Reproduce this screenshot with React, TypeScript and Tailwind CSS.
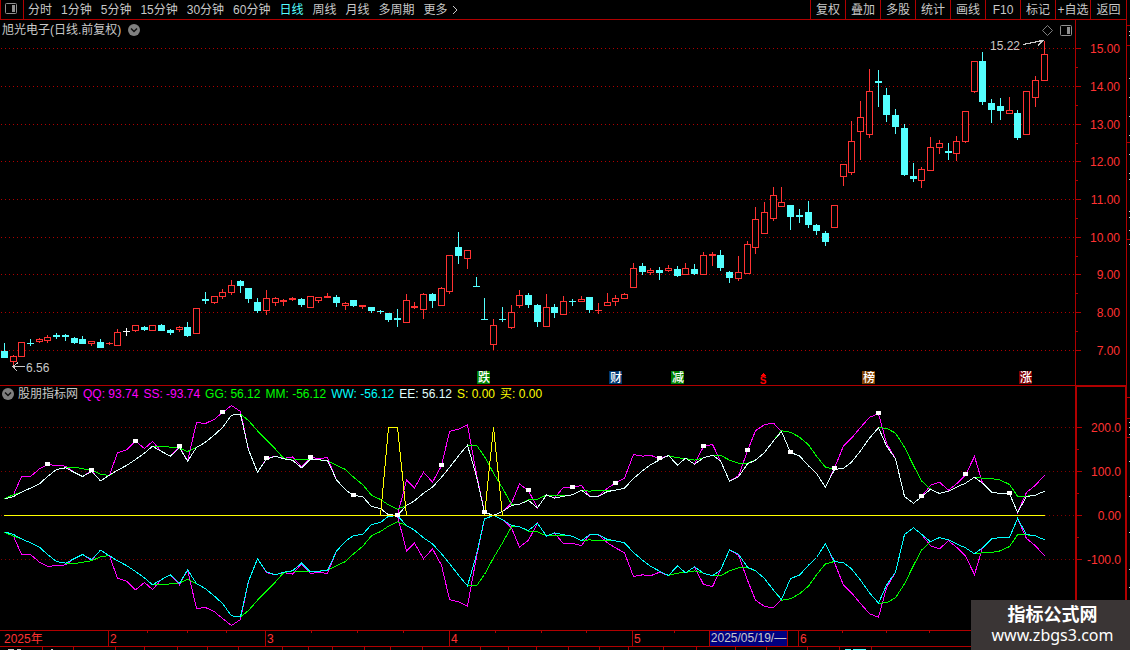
import { useState } from 'react'
import clsx from 'clsx'

type Kind = 'up' | 'down' | 'flat'
// body top, body bottom, high, low, kind
type Candle = [number, number, number, number, Kind]

const PERIODS = ['分时', '1分钟', '5分钟', '15分钟', '30分钟', '60分钟', '日线', '周线', '月线', '多周期']
const TOOLS = ['复权', '叠加', '多股', '统计', '画线', 'F10', '标记', '+自选', '返回']

const READOUTS = [
  { text: 'QQ: 93.74',   color: 'text-[#ff00ff]' },
  { text: 'SS: -93.74',  color: 'text-[#ff00ff]' },
  { text: 'GG: 56.12',   color: 'text-[#00ff00]' },
  { text: 'MM: -56.12',  color: 'text-[#00ff00]' },
  { text: 'WW: -56.12',  color: 'text-[#00ffff]' },
  { text: 'EE: 56.12',   color: 'text-[#e0ffff]' },
  { text: 'S: 0.00',     color: 'text-[#ffff00]' },
  { text: '买: 0.00',    color: 'text-[#ffff00]' },
]

const CANDLES: Candle[] = [
  [351, 358, 343, 358, 'down'], [356, 362, 355, 365, 'up'], [342, 357, 342, 357, 'up'], [343, 344, 339, 346, 'down'],
  [339, 342, 338, 343, 'up'], [337, 341, 335, 343, 'up'], [335, 337, 333, 339, 'down'], [335, 337, 334, 341, 'down'],
  [338, 343, 337, 344, 'down'], [339, 344, 336, 344, 'down'], [341, 344, 341, 346, 'up'], [342, 348, 339, 348, 'down'],
  [343, 344, 342, 345, 'up'], [332, 346, 329, 346, 'up'], [331, 332, 328, 336, 'flat'], [325, 331, 325, 332, 'up'],
  [327, 330, 326, 331, 'down'], [325, 331, 325, 331, 'up'], [325, 331, 324, 331, 'down'], [330, 333, 329, 335, 'down'],
  [327, 330, 326, 332, 'up'], [327, 336, 322, 337, 'down'], [308, 334, 308, 334, 'up'], [299, 301, 292, 304, 'down'],
  [296, 303, 296, 304, 'up'], [292, 297, 289, 299, 'up'], [285, 293, 280, 295, 'up'], [281, 286, 280, 293, 'down'],
  [288, 299, 288, 303, 'down'], [302, 311, 298, 313, 'down'], [298, 311, 290, 315, 'up'], [298, 303, 297, 306, 'up'],
  [300, 302, 299, 306, 'up'], [298, 300, 297, 301, 'up'], [299, 305, 298, 307, 'down'], [296, 308, 296, 308, 'up'],
  [297, 301, 297, 303, 'up'], [296, 298, 293, 298, 'up'], [297, 303, 295, 307, 'down'], [303, 306, 302, 310, 'up'],
  [300, 306, 300, 307, 'down'], [305, 307, 305, 309, 'up'], [307, 311, 307, 313, 'down'], [311, 312, 310, 314, 'down'],
  [313, 320, 313, 322, 'down'], [318, 320, 309, 327, 'down'], [300, 323, 294, 323, 'up'], [306, 308, 302, 309, 'up'],
  [294, 310, 293, 319, 'up'], [294, 301, 293, 308, 'down'], [288, 306, 287, 306, 'up'], [255, 292, 255, 294, 'up'],
  [247, 256, 232, 264, 'down'], [250, 259, 250, 269, 'up'], [286, 287, 277, 287, 'down'], [319, 320, 298, 320, 'down'],
  [325, 345, 319, 350, 'up'], [319, 320, 307, 322, 'down'], [312, 328, 305, 329, 'up'], [295, 306, 290, 308, 'up'],
  [295, 305, 293, 308, 'down'], [305, 322, 304, 327, 'down'], [307, 327, 294, 327, 'up'], [307, 313, 304, 318, 'down'],
  [301, 315, 296, 315, 'up'], [301, 302, 299, 306, 'down'], [299, 302, 296, 302, 'up'], [297, 310, 297, 313, 'down'],
  [310, 311, 303, 314, 'up'], [302, 306, 293, 306, 'up'], [298, 302, 295, 306, 'up'], [294, 299, 293, 299, 'up'],
  [268, 288, 263, 288, 'up'], [266, 272, 263, 275, 'down'], [270, 273, 268, 275, 'up'], [270, 273, 267, 280, 'down'],
  [268, 271, 265, 272, 'up'], [269, 276, 266, 277, 'down'], [268, 275, 263, 275, 'up'], [269, 274, 264, 275, 'down'],
  [255, 275, 252, 275, 'up'], [254, 256, 252, 266, 'up'], [255, 268, 250, 271, 'down'], [272, 278, 271, 283, 'down'],
  [272, 279, 256, 281, 'up'], [244, 274, 241, 274, 'up'], [219, 248, 207, 254, 'up'], [212, 234, 202, 234, 'up'],
  [195, 219, 187, 221, 'up'], [202, 207, 187, 207, 'up'], [205, 217, 205, 230, 'down'], [215, 217, 209, 223, 'down'],
  [212, 225, 201, 228, 'down'], [225, 231, 224, 235, 'down'], [233, 242, 231, 246, 'down'], [205, 228, 205, 228, 'up'],
  [164, 177, 164, 186, 'up'], [141, 173, 121, 175, 'up'], [117, 132, 101, 160, 'up'], [91, 135, 69, 138, 'up'],
  [81, 83, 70, 107, 'down'], [95, 115, 88, 122, 'down'], [115, 127, 109, 134, 'down'], [128, 175, 124, 176, 'down'],
  [176, 179, 163, 182, 'down'], [169, 181, 167, 188, 'up'], [147, 171, 137, 171, 'up'], [143, 148, 140, 154, 'up'],
  [151, 153, 143, 160, 'down'], [141, 154, 136, 161, 'up'], [111, 142, 111, 143, 'up'], [61, 92, 61, 93, 'up'],
  [61, 102, 52, 105, 'down'], [103, 110, 99, 123, 'down'], [106, 111, 98, 120, 'down'], [110, 114, 97, 114, 'up'],
  [113, 138, 110, 140, 'down'], [91, 135, 91, 135, 'up'], [80, 98, 76, 107, 'up'], [54, 81, 41, 81, 'up'],
]

// Indicator samples, one per candle, three units to the pixel; 407 is the zero line
const ZERO = 407
const EE = [
  358, 350, 337, 325, 312, 290, 269, 264, 278, 290, 275, 303, 286, 271, 257, 239, 220, 199, 215, 229,
  203, 244, 203, 187, 165, 143, 106, 103, 210, 277, 238, 229, 237, 241, 264, 238, 240, 242, 300, 330,
  347, 350, 380, 386, 405, 406, 377, 363, 340, 322, 292, 263, 228, 196, 290, 397, 407, 395, 377, 373,
  362, 384, 345, 355, 349, 345, 331, 349, 349, 335, 331, 325, 296, 273, 255, 240, 227, 256, 235, 253,
  234, 226, 243, 304, 291, 252, 241, 218, 183, 155, 218, 228, 258, 281, 322, 269, 265, 247, 213, 175,
  144, 198, 237, 350, 370, 351, 328, 341, 334, 322, 310, 292, 310, 337, 341, 341, 398, 350, 346, 334,
]
const QQ = [
  358, 345, 290, 290, 267, 255, 256, 259, 278, 290, 273, 303, 286, 219, 210, 184, 206, 185, 215, 229,
  199, 244, 128, 131, 118, 98, 77, 95, 210, 277, 236, 229, 236, 231, 262, 232, 237, 233, 300, 330,
  347, 350, 380, 386, 405, 406, 301, 324, 277, 307, 258, 155, 148, 135, 283, 397, 407, 395, 370, 312,
  333, 384, 345, 355, 322, 323, 317, 349, 349, 325, 310, 295, 224, 229, 226, 237, 227, 256, 235, 253,
  200, 194, 243, 304, 288, 213, 153, 134, 130, 155, 218, 228, 258, 281, 322, 265, 198, 175, 143, 112,
  102, 190, 237, 350, 370, 351, 316, 307, 331, 312, 285, 230, 310, 337, 341, 341, 398, 338, 316, 286,
]
const GG = [
  356, 345, 337, 325, 312, 290, 269, 264, 262, 267, 271, 283, 287, 271, 257, 239, 220, 199, 199, 202,
  205, 215, 203, 187, 165, 143, 106, 103, 122, 153, 180, 208, 235, 241, 238, 238, 240, 243, 256, 269,
  292, 314, 346, 359, 375, 388, 377, 363, 340, 322, 292, 263, 228, 196, 196, 230, 280, 325, 373, 373,
  360, 358, 346, 346, 348, 345, 331, 334, 331, 333, 331, 325, 296, 273, 255, 240, 227, 234, 236, 241,
  234, 226, 226, 241, 250, 250, 241, 218, 183, 153, 157, 172, 195, 229, 262, 269, 265, 247, 213, 175,
  144, 145, 160, 202, 257, 303, 328, 341, 334, 322, 310, 292, 295, 296, 301, 314, 349, 349, 346, 334,
]
const S_HITS = [44, 45, 56]
const SIGNAL = EE.map((_, i) => (S_HITS.includes(i) ? 142 : ZERO))

const PRICE_ROWS = [48, 86, 124, 161, 199, 237, 274, 312, 350]
const PRICE_LABELS = ['15.00', '14.00', '13.00', '12.00', '11.00', '10.00', '9.00', '8.00', '7.00']
const PRICE_MINOR = [67, 105, 143, 180, 218, 256, 293, 331]
const LEVEL_ROWS = [427, 471, 515, 559]
const LEVEL_LABELS = ['200.0', '100.0', '0.00', '-100.0']
const LEVEL_MINOR = [449, 493, 537]

const BADGES = [
  { x: 477,  label: '跌', fill: '#008000' },
  { x: 609,  label: '财', fill: '#003870' },
  { x: 671,  label: '减', fill: '#008000' },
  { x: 862,  label: '榜', fill: '#804000' },
  { x: 1019, label: '涨', fill: '#800000' },
]

const MONTHS = [
  { x: 108, label: '2' },
  { x: 265, label: '3' },
  { x: 449, label: '4' },
  { x: 632, label: '5' },
  { x: 798, label: '6' },
]
const WEEK_TICKS = [147, 187, 226, 311, 357, 403, 495, 541, 586, 674, 842, 886, 929]
const TICKER_CELLS = [42, 73, 115, 144, 177, 207, 238, 282, 308, 332, 364, 390, 422, 480, 508, 536, 568, 599, 628, 663, 696, 735, 766, 807, 839, 871]

const COLORS: Record<Kind, string> = { up: '#ff3232', down: '#54ffff', flat: '#ffffff' }

const candleX = (i: number) => Math.floor(4.3 + i * 8.738)
const linePoints = (values: number[], sign = 1) =>
  values.map((v, i) => `${candleX(i) + 0.5},${515.5 + (sign * (v - ZERO)) / 3}`).join(' ')

function PanelIcon() {
  return (
    <svg width="12" height="11" viewBox="0 0 12 11" fill="none">
      <rect x="0.5" y="0.5" width="11" height="10" rx="1" stroke="#909090" />
      <rect x="7" y="2" width="3" height="7" fill="#909090" />
    </svg>
  )
}

function RoundChevron() {
  return (
    <svg width="12" height="12" viewBox="0 0 12 12" fill="none">
      <circle cx="6" cy="6" r="6" fill="#808080" />
      <path d="M3 4.5 6 7.5 9 4.5" stroke="#101010" strokeWidth="1.5" />
    </svg>
  )
}

function Toolbar() {
  const [period, setPeriod] = useState('日线')

  return (
    <div className="flex h-5 shrink-0 items-stretch overflow-hidden whitespace-nowrap border-b border-[#b00000]">
      <button aria-label="面板" className="flex w-6 shrink-0 items-center justify-start border-x border-[#b00000] pb-0.5 pl-1">
        <PanelIcon />
      </button>
      <div className="flex flex-1 items-center gap-[9px] pl-1">
        {PERIODS.map(p => (
          <button
            key={p}
            onClick={() => setPeriod(p)}
            className={clsx('cursor-pointer', p === period ? 'text-[#54ffff]' : 'text-[#c8c8c8]')}
          >
            {p}
          </button>
        ))}
        <button className="flex items-center gap-1">
          更多
          <svg width="6" height="10" viewBox="0 0 6 10" fill="none">
            <path d="M1 1 5 5 1 9" stroke="#c8c8c8" />
          </svg>
        </button>
      </div>
      {TOOLS.map(t => (
        <button key={t} className="w-[35px] shrink-0 border-l border-[#b00000] last:w-9">{t}</button>
      ))}
    </div>
  )
}

function GridRows({ rows, color }: { rows: number[]; color: string }) {
  return (
    <>
      {rows.map(y => (
        <line key={y} x1="1" x2="1075" y1={y + 0.5} y2={y + 0.5} stroke={color} strokeDasharray="1 3" />
      ))}
    </>
  )
}

function AxisScale({ rows, labels, minor, top }: { rows: number[]; labels: string[]; minor: number[]; top: number }) {
  return (
    <svg className="block h-full w-full" shapeRendering="crispEdges">
      <g transform={`translate(0 ${-top})`}>
        {minor.map(y => <rect key={y} x="0" y={y} width="2" height="1" fill="#b00000" />)}
        {rows.map((y, i) => (
          <g key={y}>
            <rect x="0" y={y} width="5" height="1" fill="#b00000" />
            <text x="44" y={y + 5} textAnchor="end" fill="#ff3232">{labels[i]}</text>
          </g>
        ))}
      </g>
    </svg>
  )
}

function CandleMark({ candle, index }: { candle: Candle; index: number }) {
  const [top, bottom, high, low, kind] = candle
  const x = candleX(index)
  const color = COLORS[kind]
  const hollow = kind === 'up' && bottom - top > 2

  return (
    <g fill={color}>
      <rect x={x} y={high} width="1" height={low - high} />
      <rect x={x - 3} y={top} width="7" height={bottom - top} />
      {hollow && <rect x={x - 2} y={top + 1} width="5" height={bottom - top - 2} fill="#000" />}
    </g>
  )
}

function PricePanel() {
  return (
    <section className="flex h-[366px] shrink-0 border-b border-[#b00000]">
      <div className="flex min-w-0 flex-1 flex-col">
        <header className="flex h-5 shrink-0 items-center gap-[7px] pl-0.5 pr-[3px]">
          <h1>旭光电子(日线.前复权)</h1>
          <button aria-label="展开"><RoundChevron /></button>
          <div className="ml-auto flex items-center gap-[7px]">
            <svg width="11" height="11" viewBox="0 0 11 11" fill="none">
              <path d="M5.5 0.5 10.5 5.5 5.5 10.5 0.5 5.5Z" stroke="#808080" />
            </svg>
            <PanelIcon />
          </div>
        </header>
        <svg className="block w-full flex-1" shapeRendering="crispEdges">
          <g transform="translate(0 -40)">
            <GridRows rows={PRICE_ROWS} color="#b00000" />
            {CANDLES.map((c, i) => <CandleMark key={i} candle={c} index={i} />)}

            <g stroke="#c8c8c8" fill="none">
              <path d="M1023 44.5 1043 40.5M1036 39.5 1043 40.5 1038 45.5" />
              <path d="M25 366.5H13M18 362.5 13 366.5 17 371" />
            </g>
            <text x="990" y="50" fill="#c8c8c8">15.22</text>
            <text x="26" y="372" fill="#c8c8c8">6.56</text>

            {BADGES.map(b => (
              <g key={b.label}>
                <rect x={b.x} y="371" width="13" height="13" fill={b.fill} />
                <text x={b.x + 1} y="382" fill="#fff" fontWeight="500">{b.label}</text>
              </g>
            ))}
            <path d="M763 373 766 376H760Z" fill="#ff0000" />
            <text x="763" y="384" textAnchor="middle" fontSize="10" fontWeight="700" fill="#ff0000">S</text>
          </g>
        </svg>
      </div>
      <div className="w-[51px] shrink-0 border-l border-[#b00000]">
        <AxisScale rows={PRICE_ROWS} labels={PRICE_LABELS} minor={PRICE_MINOR} top={20} />
      </div>
    </section>
  )
}

function IndicatorPanel() {
  return (
    <section className="flex min-h-0 flex-1">
      <div className="flex min-w-0 flex-1 flex-col">
        <header className="flex h-4 shrink-0 items-center gap-[5px] overflow-hidden whitespace-nowrap pl-0.5">
          <div className="flex items-center gap-1">
            <button aria-label="指标"><RoundChevron /></button>
            <h2>股朋指标网</h2>
          </div>
          {READOUTS.map(r => <span key={r.text} className={r.color}>{r.text}</span>)}
        </header>
        <svg className="block w-full flex-1" shapeRendering="crispEdges">
          <g transform="translate(0 -402)">
            <GridRows rows={LEVEL_ROWS} color="#800000" />
            <g fill="none">
              <polyline points={linePoints(QQ)} stroke="#ff00ff" />
              <polyline points={linePoints(QQ, -1)} stroke="#ff00ff" />
              <polyline points={linePoints(GG)} stroke="#00ff00" />
              <polyline points={linePoints(GG, -1)} stroke="#00ff00" />
              <polyline points={linePoints(EE, -1)} stroke="#00ffff" />
              <polyline points={linePoints(EE)} stroke="#e0ffff" />
              <polyline points={linePoints(SIGNAL)} stroke="#ffff00" />
              <line x1="4" x2="1044" y1="515.5" y2="515.5" stroke="#ffff00" />
            </g>
            {QQ.map((v, i) =>
              i > 0 && i % 5 === 0 ? (
                <rect key={i} x={candleX(i) - 2} y={Math.round(513 + (v - ZERO) / 3)} width="5" height="4" fill="#fff" />
              ) : null
            )}
          </g>
        </svg>
      </div>
      <div className="-mt-px w-[51px] shrink-0 border-l-2 border-r border-t-2 border-[#b00000]">
        <AxisScale rows={LEVEL_ROWS} labels={LEVEL_LABELS} minor={LEVEL_MINOR} top={387} />
      </div>
    </section>
  )
}

function TimeAxis() {
  return (
    <div className="relative h-[17px] shrink-0 border-y border-[#b00000]">
      <svg className="block h-full w-full" shapeRendering="crispEdges">
        {WEEK_TICKS.map(x => <rect key={x} x={x} y="0" width="1" height="2" fill="#b00000" />)}
        <text x="4" y="12" fill="#ff3232">2025年</text>
        {MONTHS.map(m => (
          <g key={m.x}>
            <rect x={m.x} y="0" width="1" height="15" fill="#b00000" />
            <text x={m.x + 2} y="12" fill="#ff3232">{m.label}</text>
          </g>
        ))}
      </svg>
      <span className="absolute inset-y-0 left-[709px] w-[79px] whitespace-nowrap border-x border-[#b00000] bg-[#000080] text-center leading-[14px]">
        2025/05/19/—
      </span>
    </div>
  )
}

function TickerEdge() {
  return (
    <svg className="block h-[3px] w-full shrink-0" shapeRendering="crispEdges">
      {TICKER_CELLS.map(x => <rect key={x} x={x} y="0" width="1" height="3" fill="#b00000" />)}
      <path d="M8 2.5h6M17 2.5h4M51 2.5h2" stroke="#c8c8c8" />
      <path d="M845 2.5h6M853 2.5h13" stroke="#54ffff" />
    </svg>
  )
}

function SideEdge() {
  return (
    <div className="w-1 shrink-0 border-l border-[#b00000]">
      <svg className="block h-full w-full" shapeRendering="crispEdges">
        {[25, 45, 142, 239, 397, 418, 437].map(y => <rect key={y} x="0" y={y} width="3" height="1" fill="#b00000" />)}
        {[31, 35, 78, 97, 116, 135, 154, 173, 179, 211, 217, 230, 244, 422, 427, 434, 461, 496, 532, 569, 587].map(y => (
          <rect key={y} x="2" y={y} width="1" height="1" fill="#c8c8c8" />
        ))}
      </svg>
    </div>
  )
}

export default function App() {
  return (
    <main className="relative flex h-screen min-h-[650px] overflow-hidden bg-black font-['Liberation_Sans','Noto_Sans_CJK_SC',sans-serif] text-[12px] leading-4 text-[#c8c8c8]">
      <div className="flex min-w-0 flex-1 flex-col">
        <Toolbar />
        <PricePanel />
        <IndicatorPanel />
        <TimeAxis />
        <TickerEdge />
      </div>
      <SideEdge />
      <div className="absolute bottom-0 right-0 flex h-[50px] w-[159px] flex-col items-center justify-center bg-[#3a3535] pl-1 text-white">
        <strong className="text-[18px] leading-5">指标公式网</strong>
        <span className="font-['Noto_Sans',sans-serif] text-[16px] leading-5">www.zbgs3.com</span>
      </div>
    </main>
  )
}
